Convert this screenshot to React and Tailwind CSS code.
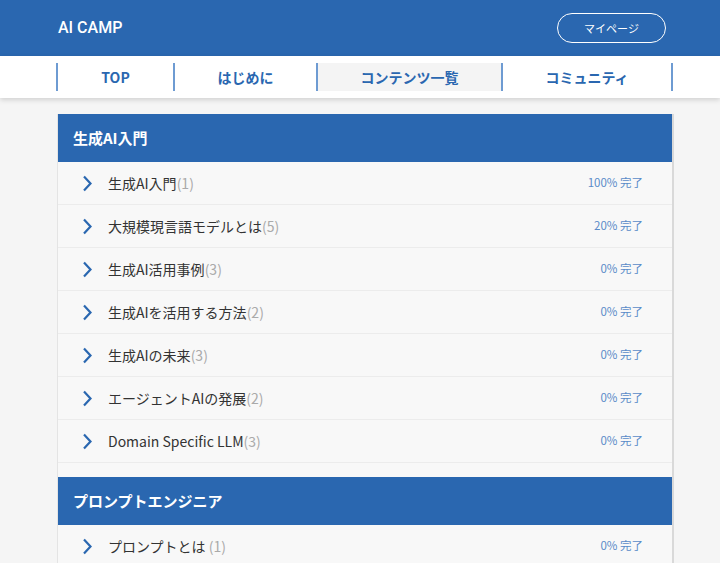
const sections = [
  {
    title: "生成AI入門",
    items: [
      { name: "生成AI入門", count: "(1)", pct: "100%" },
      { name: "大規模現言語モデルとは", count: "(5)", pct: "20%" },
      { name: "生成AI活用事例", count: "(3)", pct: "0%" },
      { name: "生成AIを活用する方法", count: "(2)", pct: "0%" },
      { name: "生成AIの未来", count: "(3)", pct: "0%" },
      { name: "エージェントAIの発展", count: "(2)", pct: "0%" },
      { name: "Domain Specific LLM", count: "(3)", pct: "0%" },
    ],
  },
  {
    title: "プロンプトエンジニア",
    items: [{ name: "プロンプトとは ", count: "(1)", pct: "0%" }],
  },
];

const navItems = [
  { label: "TOP", w: "w-[117px]" },
  { label: "はじめに", w: "w-[143px]" },
  { label: "コンテンツ一覧", w: "w-[185px]", active: true },
  { label: "コミュニティ", w: "w-[172px]", last: true },
];

const Chevron = () => (
  <svg width="11" height="17" viewBox="0 0 11 17" fill="none">
    <path d="M2 1.5 L8.5 8.5 L2 15.5" stroke="#2a67b0" strokeWidth="2.2" />
  </svg>
);

export default function App() {
  return (
    <div
      className="min-h-[563px] bg-[#f5f5f5] overflow-hidden"
      style={{ fontFamily: '"Noto Sans CJK JP", "Liberation Sans", sans-serif' }}
    >
      {/* ---------------- Header ---------------- */}
      <header className="h-[56px] bg-[#2a67b0] flex items-center justify-between pl-[58px] pr-[54px]">
        <h1 className="text-white text-[16px] font-medium font-['Roboto',sans-serif]">
          AI CAMP
        </h1>
        <button className="w-[109px] h-[30px] rounded-full border border-white text-white text-[11px]">
          マイページ
        </button>
      </header>

      {/* ---------------- Nav ---------------- */}
      <nav className="h-[42px] bg-white shadow-[0_2px_5px_rgba(0,0,0,0.15)] flex items-center pl-[56px] relative">
        {navItems.map((n) => (
          <div
            key={n.label}
            className={`${n.w} h-[28px] flex items-center justify-center border-l-2 border-[#6e9bd2] text-[#2a67b0] text-[14px] font-bold
            ${n.active ? "bg-[#f4f4f4]" : ""}
            ${n.last ? "border-r-2" : ""}`}
          >
            {n.label}
          </div>
        ))}
      </nav>

      {/* ---------------- Content ---------------- */}
      <main className="pt-[16px] pl-[57px]">
        <div className="w-[617px] bg-[#f8f8f8] border-l border-[#e4e4e4] border-r-2 border-r-[#d9d9d9]">
          {sections.map((s, si) => (
            <section key={s.title} className={si > 0 ? "mt-[14px]" : ""}>
              <div className="h-[48px] bg-[#2a67b0] flex items-center pl-[15px] text-white text-[15px] font-bold">
                {s.title}
              </div>
              {s.items.map((it) => (
                <div
                  key={it.name}
                  className="h-[43px] flex items-center border-b border-[#ececec] pl-[24px] pr-[29px]"
                >
                  <Chevron />
                  <span className="ml-[15px] text-[14px] text-[#333]">
                    {it.name}
                    <span className="text-[#aaa]">{it.count}</span>
                  </span>
                  <span className="ml-auto text-[11.5px] text-[#5a8bc8]">
                    {it.pct} 完了
                  </span>
                </div>
              ))}
            </section>
          ))}
        </div>
      </main>
    </div>
  );
}
